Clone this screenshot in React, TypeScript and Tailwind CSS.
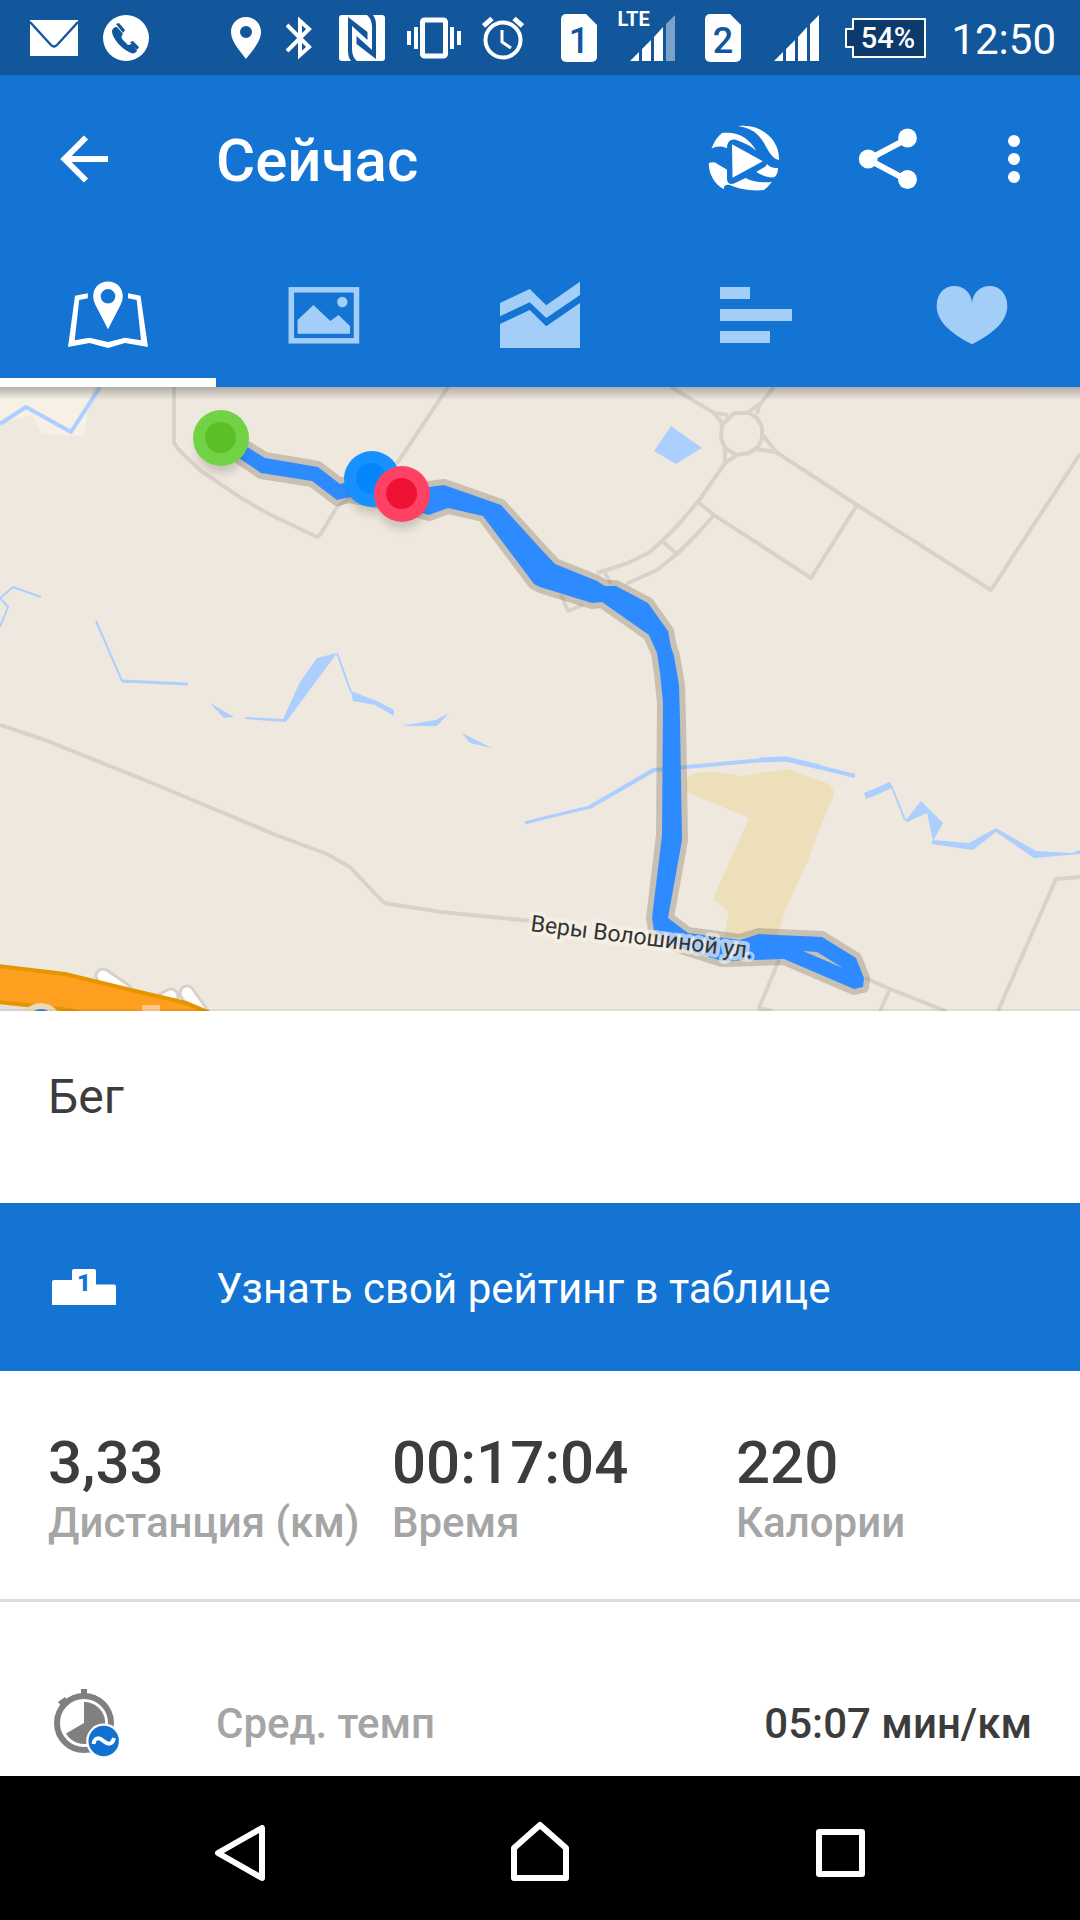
import { useState } from 'react';

const stats = [
  { value: '3,33', label: 'Дистанция (км)' },
  { value: '00:17:04', label: 'Время' },
  { value: '220', label: 'Калории' },
];

function SimIcon({ slot }: { slot: string }) {
  return (
    <svg className="h-12 w-9 shrink-0" viewBox="0 0 36 48" aria-hidden="true">
      <path d="M5 0H25L36 11V43A5 5 0 0 1 31 48H5A5 5 0 0 1 0 43V5A5 5 0 0 1 5 0Z" fill="#fff" />
      <text x="18" y="39" textAnchor="middle" className="font-['Roboto',sans-serif] text-[36px] font-medium" fill="#12579c">{slot}</text>
    </svg>
  );
}

function SignalIcon({ weak }: { weak?: boolean }) {
  return (
    <svg className="h-[46px] w-[45px]" viewBox="0 0 45 46" fill="#fff" aria-hidden="true">
      <path d="M0 46L9 37V46ZM12 46V34L21 25V46ZM24 46V22L33 12V46Z" />
      <path d="M36 46V9L45 0V46Z" opacity={weak ? 0.45 : 1} />
    </svg>
  );
}

function StatusBar() {
  return (
    <div className="flex h-[75px] items-center justify-between bg-[#12579c] pr-6 pl-[30px] text-white">
      <div className="flex items-center gap-[25px]">
        <svg className="h-9 w-12" viewBox="0 0 48 36" aria-hidden="true">
          <path d="M0 0H48V36H0Z" fill="#fff" />
          <path d="M0 2L21 25Q24 28 27 25L48 2" fill="none" stroke="#12579c" strokeWidth="2.4" />
        </svg>
        <svg className="h-[46px] w-[46px]" viewBox="0 0 46 46" aria-hidden="true">
          <circle cx="23" cy="23" r="23" fill="#fff" />
          <path d="M9 17C9 14 11 12 14 12L20 19C18 21 18 23 20 25L25 30C27 30 28 28 30 29L34 36C32 39 29 39 26 37C18 33 10 24 9 17Z" fill="#12579c" />
          <path d="M13 9L16 8L22 15L20 18ZM27 27L30 26L36 32L34 35Z" fill="#12579c" />
        </svg>
      </div>

      <div className="flex items-center">
        <svg className="h-[42px] w-[30px]" viewBox="0 0 30 42" fill="#fff" aria-hidden="true">
          <path fillRule="evenodd" d="M15 0C6 0 0 7 0 15C0 25 10 35 15 42C20 35 30 25 30 15C30 7 24 0 15 0ZM15 9A6 6 0 1 1 15 21A6 6 0 1 1 15 9Z" />
        </svg>
        <svg className="ml-[25px] h-11 w-[26px]" viewBox="0 0 26 44" fill="none" stroke="#fff" strokeWidth="4" aria-hidden="true">
          <path d="M1 9L23 31L14 39V5L23 13L1 35" />
        </svg>
        <svg className="ml-[27px] h-[46px] w-[46px]" viewBox="0 0 46 46" aria-hidden="true">
          <rect width="46" height="46" rx="3" fill="#fff" />
          <path d="M9 2L28.500 17V25L13 11V34Q13 42 18 46H12Q9 42 9 36Z" fill="#12579c" />
          <path d="M37 44L17.500 29V21L33 35V12Q33 4 28 0H34Q37 4 37 10Z" fill="#12579c" />
        </svg>
        <svg className="ml-[22px] h-[42px] w-[54px]" viewBox="0 0 54 42" fill="#fff" aria-hidden="true">
          <path d="M0 14H4V28H0ZM7 10H11V32H7ZM43 10H47V32H43ZM50 14H54V28H50Z" />
          <rect x="15.500" y="3" width="23" height="36" rx="2" fill="none" stroke="#fff" strokeWidth="5" />
        </svg>
        <svg className="ml-[21px] h-11 w-[42px]" viewBox="0 0 42 44" fill="none" stroke="#fff" strokeWidth="4" aria-hidden="true">
          <circle cx="21" cy="24" r="17.500" />
          <path d="M1.500 10L10 2.500M40.500 10L32 2.500" strokeWidth="5" />
          <path d="M20 14V26L29 32" strokeWidth="3" />
        </svg>
        <div className="ml-[37px]">
          <SimIcon slot="1" />
        </div>
        <div className="relative ml-5 flex w-[58px] justify-end">
          <SignalIcon weak />
          <span className="absolute -top-2 left-0 text-[20px] leading-6 font-bold">LTE</span>
        </div>
        <div className="ml-[30px]">
          <SimIcon slot="2" />
        </div>
        <div className="ml-[33px]">
          <SignalIcon />
        </div>
        <svg className="ml-[26px] h-10 w-[82px]" viewBox="0 0 82 40" aria-hidden="true">
          <path d="M8 1H80V39H8V29H1V11H8Z" fill="#0b3a6b" stroke="#fff" strokeWidth="2" strokeLinejoin="round" />
          <text x="43" y="30" textAnchor="middle" className="font-['Roboto',sans-serif] text-[29px] font-medium" fill="#fff">54%</text>
        </svg>
        <span className="ml-6 pt-1 text-[42px] leading-[48px]">12:50</span>
      </div>
    </div>
  );
}

function Toolbar() {
  return (
    <div className="flex h-[168px] items-center px-[60px]">
      <button type="button" aria-label="Назад">
        <svg className="h-12 w-12" viewBox="0 0 48 48" fill="none" stroke="#fff" strokeWidth="6" aria-hidden="true">
          <path d="M48 24H6M26 2.500L4.500 24L26 45.500" />
        </svg>
      </button>
      <h1 className="ml-[108px] pt-1 text-[60px] leading-[72px] font-medium text-white">Сейчас</h1>
      <div className="ml-auto flex items-center">
        <button type="button" aria-label="Видео маршрута">
          <svg className="h-[68px] w-[72px]" viewBox="0 0 72 68" fill="#fff" aria-hidden="true">
            <path d="M30.500 1.200C53 -2 72 15 71 35C64 34 60 25 56 18C50 8 43 3 30.500 1.200Z" />
            <path d="M3.500 23.700C6 17 9 12 14 8C30 6 41 13 48.300 25.700C42 20 34 17 27 14.500C22 14 19 17 19 23.300C14 20.500 8 21 3.500 23.700Z" />
            <path d="M24 19.300L54.800 36.300L24.500 52.700Z" />
            <path d="M0.800 38C3 37.300 5 37 7 37.500L19 44.700V54C19 58 22 60 26 58.500L37.600 53C45 57 54 58 63.800 57Q60 62 55.900 65C44 66.500 31 64 22 60C18 59 16 60 15.600 64.300C6 59 0.500 48 0.800 38Z" />
            <path d="M48.300 46.700L54 43.500C57 42 58 41 59.300 39C61 41.500 64 43.500 70 42.700C70 47 69 50 66.200 52.300C60 53 53 50 48.300 46.700Z" />
          </svg>
        </button>
        <button type="button" aria-label="Поделиться" className="ml-[78px]">
          <svg className="h-[62px] w-[60px]" viewBox="0 0 60 62" fill="#fff" aria-hidden="true">
            <path d="M49.500 10.700L10.200 31.500L49.500 52.300" fill="none" stroke="#fff" strokeWidth="6" />
            <circle cx="10.200" cy="31" r="9.400" />
            <circle cx="49.500" cy="10" r="9.400" />
            <circle cx="49.500" cy="51.500" r="9.400" />
          </svg>
        </button>
        <button type="button" aria-label="Ещё" className="ml-[90px]">
          <svg className="h-12 w-3" viewBox="0 0 12 48" fill="#fff" aria-hidden="true">
            <circle cx="6" cy="6" r="6" />
            <circle cx="6" cy="24" r="6" />
            <circle cx="6" cy="42" r="6" />
          </svg>
        </button>
      </div>
    </div>
  );
}

const tabs = [
  {
    name: 'Карта',
    icon: (
      <>
        <path d="M19.800 12.300V17.300L11.200 19L6.700 59.300L21.500 56.700L40 61L57 56.700L73 59.300L68.700 19L60 17.300V12.300L72.500 14.700L80 66L57 62L40 67L21.500 62L0 66L7 14.700Z" />
        <path fillRule="evenodd" d="M40 0.500C31 0.500 25.200 7 25.200 15.300C25.200 20 27 23 28.500 26L40 48.300L51.500 26C53 23 54.800 20 54.800 15.300C54.800 7 49 0.500 40 0.500ZM40 8A7.300 7.300 0 1 1 40 22.600A7.300 7.300 0 1 1 40 8Z" />
      </>
    ),
  },
  {
    name: 'Фото',
    icon: (
      <>
        <rect x="7.300" y="8.800" width="65.200" height="51" fill="none" stroke="currentColor" strokeWidth="5.500" />
        <circle cx="58.300" cy="21" r="5.200" />
        <path d="M13.600 52.700V39L29.400 24L46.300 40L54.600 34L66 45V52.700Z" />
      </>
    ),
  },
  {
    name: 'Графики',
    icon: (
      <path d="M0 22L29.700 8L46.200 24.300L80 0.700V14L46.200 37L29.700 21.300L0 35.300ZM0 43L29.700 29L46.200 45.300L80 22V67H0Z" />
    ),
  },
  {
    name: 'Круги',
    icon: <path d="M4 6H34V18H4ZM4 28H76V40H4ZM4 50H54V62H4Z" />,
  },
  {
    name: 'Пульс',
    icon: (
      <path d="M40 63.300C22 54 4.700 42 4.700 25C4.700 13 12 5 22 5C32 5 39.500 12 40 22C40.500 12 48 5 58 5C68 5 75.300 13 75.300 25C75.300 42 58 54 40 63.300Z" />
    ),
  },
];

function RouteMap() {
  const route =
    'M241 56L265 71L318 80L340 97L348 95L429 100L444 98L501 118L540 161L555 177L597 194L605 199H616L648 216L668 244L671 260L674 269L679 298L680 333L682 453L668 531L688 546L740 553L759 547L822 550L856 571L864 591L863 600L854 602L784 572L722 574L678 560L654 543L652 531L662 448L663 316L660 286L657 266L649 248L602 215L592 216L540 200L534 197L483 129L448 121L429 128L400 120L350 110L337 113L312 94L261 86L239 71ZM803 564L843 581L817 565Z';

  return (
    <svg className="block h-auto w-full" viewBox="0 0 1080 624" role="img" aria-label="Карта маршрута">
      <defs>
        <linearGradient id="headerShadow" x1="0" y1="0" x2="0" y2="1">
          <stop offset="0" stopColor="#000" stopOpacity="0.26" />
          <stop offset="1" stopColor="#000" stopOpacity="0" />
        </linearGradient>
        <filter id="pinShadow" x="-50%" y="-50%" width="200%" height="200%">
          <feGaussianBlur stdDeviation="5" />
        </filter>
      </defs>
      <rect width="1080" height="624" fill="#efe8de" />
      <path d="M0 0H92L84 49L42 47L32 28L0 36Z" fill="#f6f0e5" />

      {/* field */}
      <path d="M686 391L695 386L719 385L741 389L788 382L826 396Q834 400 834 408L822 436L807 476L785 523L778 550H724L729 524L713 512L749 431L686 405Z" fill="#eddfba" />

      {/* minor roads */}
      <g fill="none" stroke="#d8d3c8" strokeWidth="4" strokeLinejoin="round">
        <path d="M174 0V56L179 63L201 84L241 111L269 127L317 150L320 148L337 120L398 75L448 0" />
        <path d="M0 338L45 353L152 396L276 448L327 467L350 480L384 516L441 525L532 534" />
        <path d="M671 0L714 26L728 28M714 26L722 36M774 0L760 17L757 27M760 17L747 26" />
        <path d="M734 26H749L757 31L762 40V51L758 60L749 66L736 68L725 61L721 51L722 38Z" />
        <path d="M763 48L776 65L756 62M776 65L857 118L991 203L1080 67" />
        <path d="M857 118L811 191L714 128L698 115M725 60V76L737 68" />
        <path d="M725 76L700 112L679 137L662 154L650 165L628 176L597 186" />
        <path d="M714 128L698 146L677 167L657 183L626 197M662 154L677 167M605 186L611 197M561 208L568 224L583 218" />
        <path d="M1080 490L1056 492L998 624M779 573L759 621L772 624M865 591L890 602L946 624M890 602L880 624" />
      </g>

      {/* water */}
      <g fill="#adcfff">
        <path d="M671 39L702 61L676 77L654 64Z" />
        <path d="M210 316L234 330L224 331ZM245 330L283 332L300 295L317 271L337 266L286 335L245 332ZM351 304L377 314L394 323V329L375 318L353 314Z" />
        <path d="M400 335L406 338L436 333L449 326L437 339H406ZM462 346L492 361L470 356Z" />
        <path d="M864 406L890 395L892 400L866 412ZM905 434L921 414L943 436L933 454L927 426L907 435Z" />
        <path d="M933 453L969 456L996 441L1036 464L1072 466L1080 463V467L1034 471L996 445L973 463L931 457Z" />
      </g>
      <g fill="none" stroke="#adcfff" strokeLinejoin="round">
        <path d="M0 37L26 20L71 45L100 0" strokeWidth="4" />
        <path d="M0 211L13 200L41 210M0 211L8 220L0 240M96 234L122 294M337 266L351 305M891 398L905 433" strokeWidth="2" />
        <path d="M122 294L188 297M525 436L540 432L590 420L654 382" strokeWidth="3" />
        <path d="M590 420L654 383L774 372L786 372L855 389" strokeWidth="4" />
        <path d="M760 373L786 372L820 380" strokeWidth="5" />
        <path d="M869 408L891 398" strokeWidth="6" />
      </g>

      {/* highway with its ramps */}
      <g fill="none" strokeLinecap="round">
        <path d="M103 589L125 604M162 614L171 609M187 606L201 626" stroke="#d8d1c8" strokeWidth="17" />
        <path d="M103 589L125 604M162 614L171 609M187 606L201 626" stroke="#fff" strokeWidth="11" />
      </g>
      <path d="M0 615L26 618L84 626H0Z" fill="#e6dfd8" />
      <path d="M0 579L65 587L131 603L186 616L210 626H84L62 622L26 618L0 615Z" fill="#ff9f1f" />
      <path d="M-2 579L65 587L131 603L186 616L210 626M-2 615L26 618L62 622L84 626" fill="none" stroke="#e69500" strokeWidth="4" />
      <circle cx="41" cy="636" r="20" fill="#ecd9b6" />
      <circle cx="41" cy="636" r="14" fill="#3f7ed8" />
      <rect x="142" y="618" width="18" height="6" fill="#ffc98c" />

      <path d={route} fill="none" stroke="#6e6450" strokeOpacity="0.3" strokeWidth="12" strokeLinejoin="round" />
      <path d={route} fill="#2e8bff" fillRule="evenodd" />

      <text
        x="530"
        y="544"
        transform="rotate(7 530 544)"
        className="font-['Roboto',sans-serif] text-[23px]"
        fill="#333"
        stroke="#f8f4ea"
        strokeOpacity="0.65"
        strokeWidth="8"
        strokeLinejoin="round"
        paintOrder="stroke"
      >
        Веры Волошиной ул.
      </text>

      <g fill="#000" opacity="0.16" filter="url(#pinShadow)">
        <circle cx="221" cy="62" r="24" />
        <circle cx="372" cy="103" r="24" />
        <circle cx="402" cy="118" r="24" />
      </g>
      <circle cx="221" cy="51" r="28" fill="#72d246" />
      <circle cx="220.500" cy="50.500" r="15.500" fill="#5bbf28" />
      <circle cx="372" cy="92" r="28" fill="#1791ff" />
      <circle cx="371.500" cy="91.500" r="15.500" fill="#0587fb" />
      <circle cx="402" cy="107" r="28" fill="#ff4263" />
      <circle cx="401.500" cy="106.500" r="15.500" fill="#f01235" />

      <rect width="1080" height="13" fill="url(#headerShadow)" />
      <rect y="622" width="1080" height="2" fill="#000" opacity="0.06" />
    </svg>
  );
}

export default function App() {
  const [activeTab, setActiveTab] = useState(0);

  return (
    <div className="flex min-h-screen flex-col bg-white font-['Roboto',sans-serif] text-[#3c3c3c]">
      <header className="bg-[#1474d4]">
        <StatusBar />
        <Toolbar />
        <nav className="grid grid-cols-5" role="tablist">
          {tabs.map((tab, i) => (
            <button
              key={tab.name}
              type="button"
              role="tab"
              aria-label={tab.name}
              aria-selected={i === activeTab}
              onClick={() => setActiveTab(i)}
              className={
                i === activeTab
                  ? 'flex h-36 items-center justify-center border-b-[9px] border-white pt-[9px] text-white'
                  : 'flex h-36 items-center justify-center text-[#a3cef7]'
              }
            >
              <svg className="h-[68px] w-20" viewBox="0 0 80 68" fill="currentColor" aria-hidden="true">
                {tab.icon}
              </svg>
            </button>
          ))}
        </nav>
      </header>

      <main>
        <RouteMap />

        <h2 className="px-12 pt-[58px] pb-[78px] text-[48px] leading-[56px]">Бег</h2>

        <a href="#rating" className="flex h-[168px] items-center bg-[#1474d4] pr-12 pl-[52px] text-white">
          <svg className="h-9 w-16" viewBox="0 0 64 36" aria-hidden="true">
            <path d="M0 36V13Q0 11 2 11H20V2Q20 0 22 0H42Q44 0 44 2V15.500H62Q64 15.500 64 17.500V36Z" fill="#fff" />
            <text x="32" y="22" textAnchor="middle" className="font-['Roboto',sans-serif] text-[24px] font-black" fill="#1474d4">1</text>
          </svg>
          <span className="ml-[100px] pt-1 text-[42px] leading-[48px]">Узнать свой рейтинг в таблице</span>
        </a>

        <dl className="grid grid-cols-3 border-b-[3px] border-[#dcdcdc] pt-[62px] pb-[46px] pl-12">
          {stats.map((stat) => (
            <div key={stat.label} className="flex flex-col-reverse font-medium">
              <dt className="text-[42px] leading-[60px] whitespace-nowrap text-[#a5a5a5]">{stat.label}</dt>
              <dd className="text-[60px] leading-[60px]">{stat.value}</dd>
            </div>
          ))}
        </dl>

        <div className="flex items-center pt-[87px] pr-12 pb-[19px] pl-[54px] text-[42px] leading-[48px] font-medium">
          <svg className="h-[68px] w-[66px]" viewBox="0 0 66 68" aria-hidden="true">
            <circle cx="30" cy="34" r="27" fill="none" stroke="#808080" strokeWidth="6" />
            <path d="M27 0H33V6H27ZM4 13L11 8L14 12L8 18Z" fill="#808080" />
            <path d="M30 34V13A21 21 0 1 1 12 44.500Z" fill="#808080" />
            <circle cx="49.700" cy="52" r="17.500" fill="#fff" />
            <circle cx="49.700" cy="52" r="15.200" fill="#1170d0" />
            <path d="M39.500 55C41 47 46 49 49.500 52C53 55 58 57 60 49" fill="none" stroke="#fff" strokeWidth="4" />
          </svg>
          <span className="ml-24 pt-0.5 text-[#a5a5a5]">Сред. темп</span>
          <span className="ml-auto pt-0.5">05:07 мин/км</span>
        </div>
      </main>

      <footer className="mt-auto grid h-36 grid-cols-3 bg-black px-[90px]">
        <button type="button" aria-label="Назад" className="flex items-center justify-center">
          <svg className="h-[72px] w-[60px]" viewBox="0 0 60 72" fill="none" stroke="#fff" strokeWidth="6" strokeLinejoin="round" aria-hidden="true">
            <path d="M52 16V66L8 41Z" />
          </svg>
        </button>
        <button type="button" aria-label="Домой" className="flex items-center justify-center">
          <svg className="h-[72px] w-[60px]" viewBox="0 0 60 72" fill="none" stroke="#fff" strokeWidth="6" strokeLinejoin="round" aria-hidden="true">
            <path d="M4 66V36L30 13L56 36V66Z" />
          </svg>
        </button>
        <button type="button" aria-label="Недавние" className="flex items-center justify-center">
          <svg className="h-[72px] w-[60px]" viewBox="0 0 60 72" fill="none" stroke="#fff" strokeWidth="6" strokeLinejoin="round" aria-hidden="true">
            <path d="M9 20H52V62H9Z" />
          </svg>
        </button>
      </footer>
    </div>
  );
}
